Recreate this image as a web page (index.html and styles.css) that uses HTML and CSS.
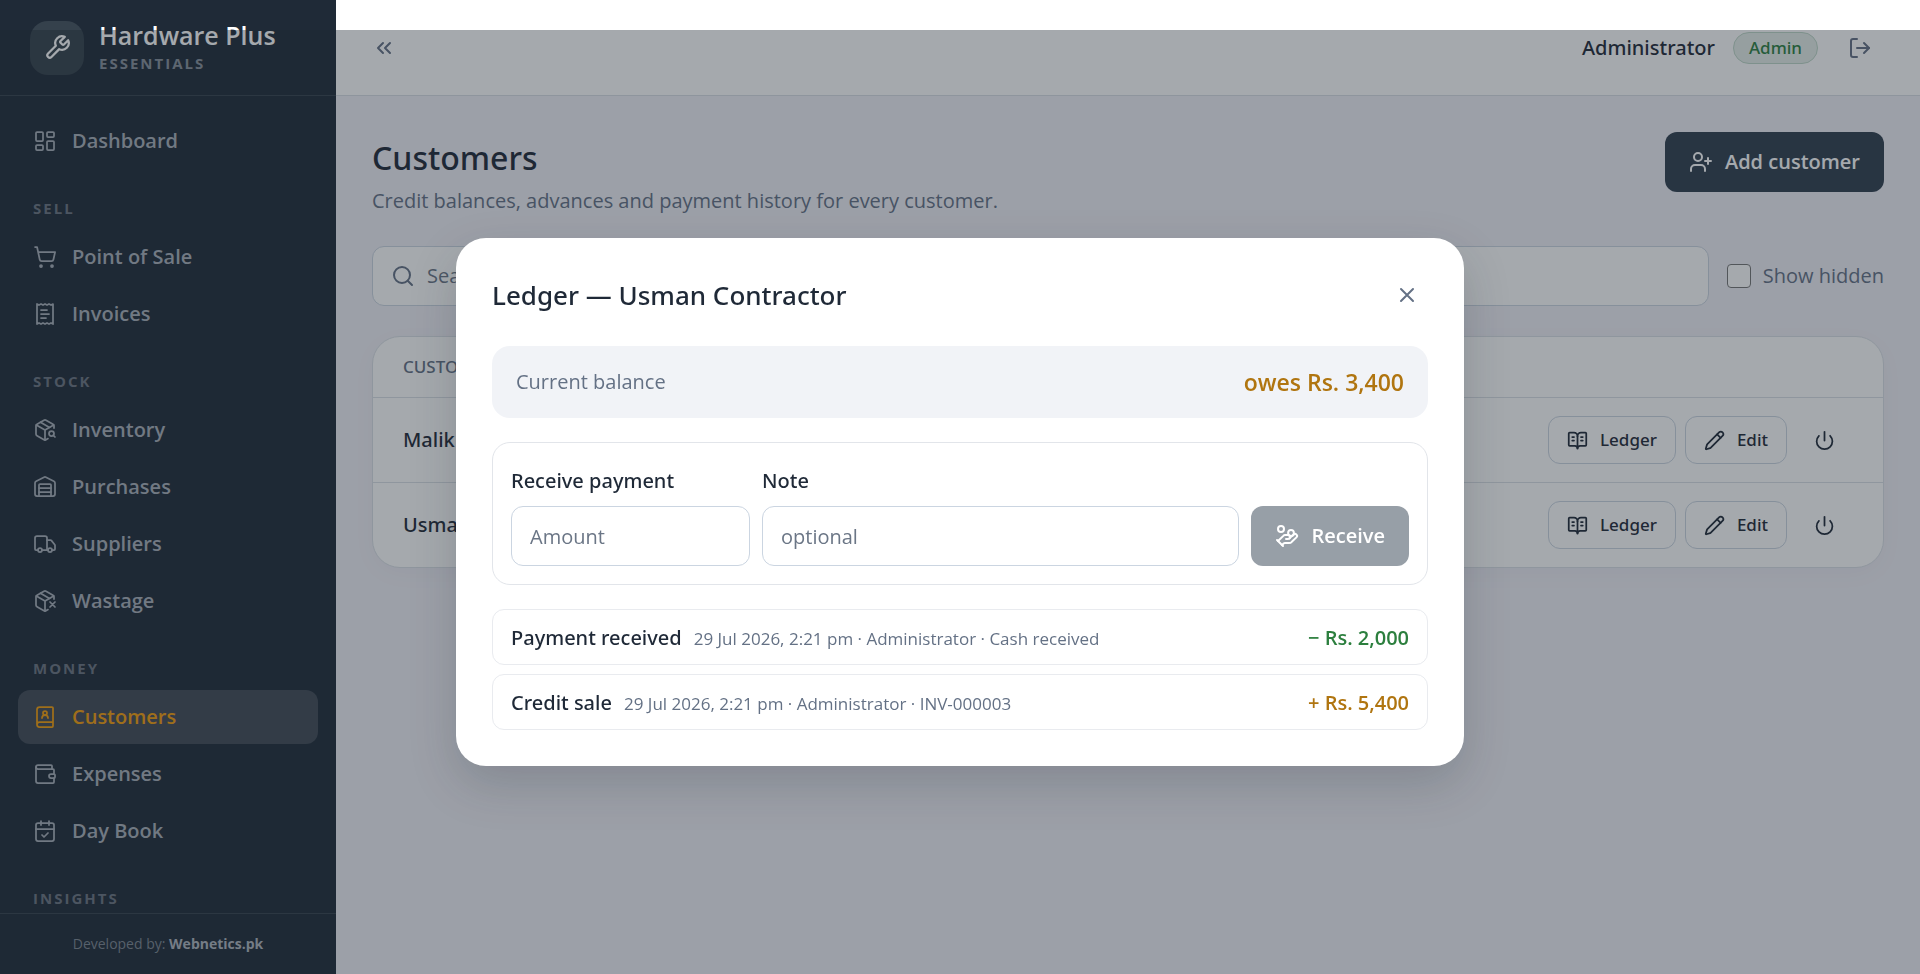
FILE: index.html
```html
<!DOCTYPE html>
<html lang="en">
<head>
<meta charset="utf-8">
<meta name="viewport" content="width=device-width, initial-scale=1">
<title>Customers – Hardware Plus</title>
<link rel="stylesheet" href="styles.css">
</head>
<body>
<svg class="sprite" aria-hidden="true">
  <symbol id="i-wrench" viewBox="0 0 24 24"><path d="M14.7 6.3a1 1 0 0 0 0 1.4l1.6 1.6a1 1 0 0 0 1.4 0l3.77-3.77a6 6 0 0 1-7.94 7.94l-6.91 6.91a2.12 2.12 0 0 1-3-3l6.91-6.91a6 6 0 0 1 7.94-7.94l-3.76 3.76z"/></symbol>
  <symbol id="i-dashboard" viewBox="0 0 24 24"><rect width="7" height="9" x="3" y="3" rx="1"/><rect width="7" height="5" x="14" y="3" rx="1"/><rect width="7" height="9" x="14" y="12" rx="1"/><rect width="7" height="5" x="3" y="16" rx="1"/></symbol>
  <symbol id="i-cart" viewBox="0 0 24 24"><circle cx="8" cy="21" r="1"/><circle cx="19" cy="21" r="1"/><path d="M2.05 2.05h2l2.66 12.42a2 2 0 0 0 2 1.58h9.78a2 2 0 0 0 1.95-1.57l1.65-7.43H5.12"/></symbol>
  <symbol id="i-receipt" viewBox="0 0 24 24"><path d="M4 2v20l2-1 2 1 2-1 2 1 2-1 2 1 2-1 2 1V2l-2 1-2-1-2 1-2-1-2 1-2-1-2 1Z"/><path d="M14 8H8M16 12H8M13 16H8"/></symbol>
  <symbol id="i-package-search" viewBox="0 0 24 24"><path d="M21 10V8a2 2 0 0 0-1-1.73l-7-4a2 2 0 0 0-2 0l-7 4A2 2 0 0 0 3 8v8a2 2 0 0 0 1 1.73l7 4a2 2 0 0 0 2 0l2-1.14"/><path d="m7.5 4.27 9 5.15"/><path d="M3.29 7 12 12l8.71-5M12 22V12"/><circle cx="18.5" cy="15.5" r="2.5"/><path d="M20.27 17.27 22 19"/></symbol>
  <symbol id="i-package-x" viewBox="0 0 24 24"><path d="M21 10V8a2 2 0 0 0-1-1.73l-7-4a2 2 0 0 0-2 0l-7 4A2 2 0 0 0 3 8v8a2 2 0 0 0 1 1.73l7 4a2 2 0 0 0 2 0l2-1.14"/><path d="m7.5 4.27 9 5.15"/><path d="M3.29 7 12 12l8.71-5M12 22V12"/><path d="m17 13 5 5m-5 0 5-5"/></symbol>
  <symbol id="i-warehouse" viewBox="0 0 24 24"><path d="M18 21V10a1 1 0 0 0-1-1H7a1 1 0 0 0-1 1v11"/><path d="M22 19a2 2 0 0 1-2 2H4a2 2 0 0 1-2-2V8a2 2 0 0 1 1.132-1.803l7.95-3.974a2 2 0 0 1 1.837 0l7.948 3.974A2 2 0 0 1 22 8z"/><path d="M6 13h12M6 17h12"/></symbol>
  <symbol id="i-truck" viewBox="0 0 24 24"><path d="M14 18V6a2 2 0 0 0-2-2H4a2 2 0 0 0-2 2v11a1 1 0 0 0 1 1h2"/><path d="M15 18H9"/><path d="M19 18h2a1 1 0 0 0 1-1v-3.65a1 1 0 0 0-.22-.624l-3.48-4.35A1 1 0 0 0 17.52 8H14"/><circle cx="17" cy="18" r="2"/><circle cx="7" cy="18" r="2"/></symbol>
  <symbol id="i-book-user" viewBox="0 0 24 24"><path d="M15 13a3 3 0 1 0-6 0"/><path d="M4 19.5v-15A2.5 2.5 0 0 1 6.5 2H19a1 1 0 0 1 1 1v18a1 1 0 0 1-1 1H6.5a1 1 0 0 1 0-5H20"/><circle cx="12" cy="8" r="2"/></symbol>
  <symbol id="i-wallet" viewBox="0 0 24 24"><path d="M19 7V4a1 1 0 0 0-1-1H5a2 2 0 0 0 0 4h15a1 1 0 0 1 1 1v4h-3a2 2 0 0 0 0 4h3a1 1 0 0 0 1-1v-2a1 1 0 0 0-1-1"/><path d="M3 5v14a2 2 0 0 0 2 2h15a1 1 0 0 0 1-1v-4"/></symbol>
  <symbol id="i-calendar" viewBox="0 0 24 24"><path d="M8 2v4M16 2v4"/><rect width="18" height="18" x="3" y="4" rx="2"/><path d="M3 10h18"/><path d="m9 16 2 2 4-4"/></symbol>
  <symbol id="i-chevrons" viewBox="0 0 24 24"><path d="m11 17-5-5 5-5"/><path d="m18 17-5-5 5-5"/></symbol>
  <symbol id="i-logout" viewBox="0 0 24 24"><path d="m16 17 5-5-5-5"/><path d="M21 12H9"/><path d="M9 21H5a2 2 0 0 1-2-2V5a2 2 0 0 1 2-2h4"/></symbol>
  <symbol id="i-user-plus" viewBox="0 0 24 24"><path d="M16 21v-2a4 4 0 0 0-4-4H6a4 4 0 0 0-4 4v2"/><circle cx="9" cy="7" r="4"/><path d="M19 8v6M22 11h-6"/></symbol>
  <symbol id="i-search" viewBox="0 0 24 24"><circle cx="11" cy="11" r="8"/><path d="m21 21-4.3-4.3"/></symbol>
  <symbol id="i-book-open" viewBox="0 0 24 24"><path d="M12 7v14M16 12h2M16 8h2M6 12h2M6 8h2"/><path d="M3 18a1 1 0 0 1-1-1V4a1 1 0 0 1 1-1h5a4 4 0 0 1 4 4 4 4 0 0 1 4-4h5a1 1 0 0 1 1 1v13a1 1 0 0 1-1 1h-6a3 3 0 0 0-3 3 3 3 0 0 0-3-3z"/></symbol>
  <symbol id="i-pencil" viewBox="0 0 24 24"><path d="M21.174 6.812a1 1 0 0 0-3.986-3.987L3.842 16.174a2 2 0 0 0-.5.83l-1.321 4.352a.5.5 0 0 0 .623.622l4.353-1.32a2 2 0 0 0 .83-.497z"/><path d="m15 5 4 4"/></symbol>
  <symbol id="i-power" viewBox="0 0 24 24"><path d="M12 2v10"/><path d="M18.4 6.6a9 9 0 1 1-12.77.04"/></symbol>
  <symbol id="i-x" viewBox="0 0 24 24"><path d="M18 6 6 18M6 6l12 12"/></symbol>
  <symbol id="i-hand-coins" viewBox="0 0 24 24"><path d="M11 15h2a2 2 0 1 0 0-4h-3c-.6 0-1.1.2-1.4.6L3 17"/><path d="m7 21 1.6-1.4c.3-.4.8-.6 1.4-.6h4c1.1 0 2.1-.4 2.8-1.2l4.6-4.4a2 2 0 0 0-2.75-2.91l-4.2 3.9"/><path d="m2 16 6 6"/><circle cx="16" cy="9" r="2.9"/><circle cx="6" cy="5" r="3"/></symbol>
</svg>

<div class="app">
  <aside class="sidebar">
    <div class="brand">
      <span class="brand-mark"><svg class="icon icon-lg"><use href="#i-wrench"/></svg></span>
      <div>
        <div class="brand-name">Hardware Plus</div>
        <div class="brand-tag">ESSENTIALS</div>
      </div>
    </div>
    <nav class="nav" aria-label="Main">
      <a class="nav-item" href="#"><svg class="icon"><use href="#i-dashboard"/></svg>Dashboard</a>
      <div class="nav-label">SELL</div>
      <a class="nav-item" href="#"><svg class="icon"><use href="#i-cart"/></svg>Point of Sale</a>
      <a class="nav-item" href="#"><svg class="icon"><use href="#i-receipt"/></svg>Invoices</a>
      <div class="nav-label">STOCK</div>
      <a class="nav-item" href="#"><svg class="icon"><use href="#i-package-search"/></svg>Inventory</a>
      <a class="nav-item" href="#"><svg class="icon"><use href="#i-warehouse"/></svg>Purchases</a>
      <a class="nav-item" href="#"><svg class="icon"><use href="#i-truck"/></svg>Suppliers</a>
      <a class="nav-item" href="#"><svg class="icon"><use href="#i-package-x"/></svg>Wastage</a>
      <div class="nav-label">MONEY</div>
      <a class="nav-item active" href="#" aria-current="page"><svg class="icon"><use href="#i-book-user"/></svg>Customers</a>
      <a class="nav-item" href="#"><svg class="icon"><use href="#i-wallet"/></svg>Expenses</a>
      <a class="nav-item" href="#"><svg class="icon"><use href="#i-calendar"/></svg>Day Book</a>
      <div class="nav-label">INSIGHTS</div>
    </nav>
    <footer class="credit">Developed by: <strong>Webnetics.pk</strong></footer>
  </aside>

  <div class="content">
    <header class="topbar">
      <button class="ghost" type="button" aria-label="Collapse sidebar"><svg class="icon"><use href="#i-chevrons"/></svg></button>
      <div class="account">
        <span class="user">Administrator</span>
        <span class="badge">Admin</span>
        <button class="ghost ghost-pad" type="button" aria-label="Log out"><svg class="icon"><use href="#i-logout"/></svg></button>
      </div>
    </header>

    <main class="main">
      <div class="page-head">
        <div>
          <h1>Customers</h1>
          <p>Credit balances, advances and payment history for every customer.</p>
        </div>
        <button class="btn-primary" type="button"><svg class="icon"><use href="#i-user-plus"/></svg>Add customer</button>
      </div>

      <div class="filters">
        <div class="search">
          <svg class="icon"><use href="#i-search"/></svg>
          <input type="text" placeholder="Search" aria-label="Search customers">
        </div>
        <label class="check"><input type="checkbox">Show hidden</label>
      </div>

      <div class="card">
        <table>
          <thead><tr><th>CUSTOMER</th><th></th></tr></thead>
          <tbody>
            <tr>
              <td>Malik</td>
              <td><div class="actions">
                <button class="btn-small" type="button"><svg class="icon icon-sm"><use href="#i-book-open"/></svg>Ledger</button>
                <button class="btn-small" type="button"><svg class="icon icon-sm"><use href="#i-pencil"/></svg>Edit</button>
                <button class="btn-power" type="button" aria-label="Hide Malik"><svg class="icon icon-sm"><use href="#i-power"/></svg></button>
              </div></td>
            </tr>
            <tr>
              <td>Usman Contractor</td>
              <td><div class="actions">
                <button class="btn-small" type="button"><svg class="icon icon-sm"><use href="#i-book-open"/></svg>Ledger</button>
                <button class="btn-small" type="button"><svg class="icon icon-sm"><use href="#i-pencil"/></svg>Edit</button>
                <button class="btn-power" type="button" aria-label="Hide Usman Contractor"><svg class="icon icon-sm"><use href="#i-power"/></svg></button>
              </div></td>
            </tr>
          </tbody>
        </table>
      </div>
    </main>
  </div>
</div>

<div class="overlay">
  <section class="modal" role="dialog" aria-modal="true" aria-labelledby="ledger-title">
    <header class="modal-head">
      <h2 id="ledger-title">Ledger — Usman Contractor</h2>
      <button class="ghost close" type="button" aria-label="Close"><svg class="icon"><use href="#i-x"/></svg></button>
    </header>
    <div class="balance"><span>Current balance</span><strong>owes Rs. 3,400</strong></div>
    <form class="pay">
      <div class="field field-amount"><label for="amount">Receive payment</label><input id="amount" type="text" placeholder="Amount"></div>
      <div class="field field-note"><label for="note">Note</label><input id="note" type="text" placeholder="optional"></div>
      <button class="btn-primary" type="button" disabled><svg class="icon"><use href="#i-hand-coins"/></svg>Receive</button>
    </form>
    <ul class="entries">
      <li><span class="kind">Payment received</span><span class="meta">29 Jul 2026, 2:21 pm · Administrator · Cash received</span><span class="sum credit-in">− Rs. 2,000</span></li>
      <li><span class="kind">Credit sale</span><span class="meta">29 Jul 2026, 2:21 pm · Administrator · INV-000003</span><span class="sum debit">+ Rs. 5,400</span></li>
    </ul>
  </section>
</div>
</body>
</html>
```

FILE: styles.css
```css
*, *::before, *::after { box-sizing: border-box; }

:root {
  --ink: #1f2937;
  --muted: #647185;
  --line: #e2e5ea;
  --field: #cbd5e1;
  --amber: #b07510;
  --medium: "Noto Sans", "Open Sans", sans-serif;
}

body {
  margin: 0;
  font-family: "Open Sans", "Noto Sans", sans-serif;
  font-size: 20px;
  line-height: 30px;
  color: var(--ink);
  background: #f1f0f7;
}

button, input { font: inherit; color: inherit; }
h1, h2, p, ul { margin: 0; padding: 0; }

.sprite { position: absolute; width: 0; height: 0; }
.icon {
  width: 24px;
  height: 24px;
  flex: none;
  fill: none;
  stroke: currentColor;
  stroke-width: 2;
  stroke-linecap: round;
  stroke-linejoin: round;
}
.icon-sm { width: 21px; height: 21px; }
.icon-lg { width: 27px; height: 27px; }

.app { display: flex; height: 100vh; overflow: hidden; }

/* Sidebar */
.sidebar {
  width: 336px;
  flex: none;
  display: flex;
  flex-direction: column;
  background: #1f2a37;
  color: #fff;
}
.brand {
  display: flex;
  align-items: center;
  gap: 15px;
  height: 96px;
  flex: none;
  padding: 0 30px;
  border-bottom: 1px solid #36414d;
}
.brand-mark {
  display: grid;
  place-items: center;
  width: 54px;
  height: 54px;
  border-radius: 18px;
  background: #35414c;
}
.brand-name { font-size: 25px; font-weight: 600; line-height: 28px; }
.brand-tag { padding-top: 2px; font-size: 15px; font-weight: 700; line-height: 24px; letter-spacing: 2px; color: #87909b; }

.nav {
  flex: 1;
  min-height: 0;
  overflow: hidden;
  display: flex;
  flex-direction: column;
  gap: 3px;
  padding: 18px;
}
.nav-item {
  display: flex;
  align-items: center;
  gap: 15px;
  height: 54px;
  flex: none;
  padding: 0 15px;
  border-radius: 12px;
  font-weight: 600;
  color: #a9b0ba;
  text-decoration: none;
}
.nav-item .icon { stroke-width: 1.75; }
.nav-item.active { background: #414a56; color: #f59e0b; }
.nav-label {
  flex: none;
  padding: 25px 15px 7px;
  font-size: 15px;
  font-weight: 700;
  line-height: 24px;
  letter-spacing: 2px;
  color: #6b7480;
}
.credit {
  flex: none;
  padding: 18px;
  border-top: 1px solid #36414d;
  text-align: center;
  font-size: 14px;
  line-height: 24px;
  color: #7d8691;
}
.credit strong { color: #b0b6bf; }

/* Page */
.content { flex: 1; min-width: 0; display: flex; flex-direction: column; }
.topbar {
  display: flex;
  align-items: center;
  justify-content: space-between;
  height: 96px;
  flex: none;
  padding: 0 36px;
  background: #fff;
  border-bottom: 1px solid #d9dee4;
}
.ghost {
  display: grid;
  place-items: center;
  padding: 0;
  border: 0;
  background: none;
  color: var(--muted);
}
.ghost-pad { width: 48px; height: 48px; }
.account { display: flex; align-items: center; gap: 18px; }
.user { font-family: var(--medium); font-weight: 500; }
.badge {
  padding: 0 15px;
  border: 1px solid #bfd8c8;
  border-radius: 16px;
  background: #e6eeea;
  color: #2c8040;
  font-family: var(--medium);
  font-size: 17px;
  font-weight: 500;
}

.main { padding: 36px; display: flex; flex-direction: column; }
.page-head { display: flex; justify-content: space-between; align-items: flex-start; margin-bottom: 27px; }
.page-head h1 { font-family: var(--medium); font-size: 32px; font-weight: 500; line-height: 51px; }
.page-head p { line-height: 36px; color: var(--muted); }
.btn-primary {
  display: flex;
  align-items: center;
  gap: 12px;
  height: 60px;
  flex: none;
  padding: 0 24px;
  border: 0;
  border-radius: 12px;
  background: #2f3e4e;
  color: #fff;
  font-weight: 600;
}
.btn-primary:disabled { background: #979fa7; }

.filters { display: flex; align-items: center; gap: 18px; margin-bottom: 30px; }
.search {
  flex: 1;
  display: flex;
  align-items: center;
  gap: 12px;
  height: 60px;
  padding: 0 18px;
  border: 1px solid var(--field);
  border-radius: 12px;
  background: #fff;
  color: var(--muted);
}
.search input { flex: 1; min-width: 0; border: 0; padding: 0; background: none; outline: none; }
input::placeholder { color: #6b7686; opacity: 1; }
.check { display: flex; align-items: center; gap: 12px; color: var(--muted); }
.check input {
  appearance: none;
  width: 24px;
  height: 24px;
  margin: 0;
  border: 1px solid #767676;
  border-radius: 4px;
  background: #fff;
}

.card {
  overflow: hidden;
  border: 1px solid #dbe0e6;
  border-radius: 28px;
  background: #fff;
  box-shadow: 0 6px 24px rgba(31, 41, 55, 0.03);
}
table { width: 100%; border-collapse: separate; border-spacing: 0; }
th, td { text-align: left; font-family: var(--medium); font-weight: 500; border-bottom: 1px solid #dbe0e6; }
th { height: 61px; padding: 0 30px; font-size: 17px; color: var(--muted); }
td { height: 85px; padding: 0 30px; }
tbody tr:last-child td { height: 84px; border-bottom: 0; }
.actions { display: flex; justify-content: flex-end; gap: 9px; }
.btn-small {
  display: flex;
  align-items: center;
  gap: 12px;
  height: 48px;
  padding: 0 18px;
  border: 1px solid var(--field);
  border-radius: 12px;
  background: #fff;
  font-family: var(--medium);
  font-size: 17px;
  font-weight: 500;
}
.btn-power { display: grid; place-items: center; width: 57px; height: 48px; padding: 0; border: 0; background: none; }

/* Ledger dialog */
.overlay {
  position: fixed;
  inset: 30px 0 0;
  display: grid;
  place-items: center;
  background: rgba(31, 41, 51, 0.4);
}
.modal {
  width: min(1008px, 92%);
  padding: 36px;
  border-radius: 30px;
  background: #fff;
  box-shadow: 0 18px 48px rgba(31, 41, 51, 0.2);
}
.modal-head { display: flex; align-items: center; justify-content: space-between; margin-bottom: 30px; }
.modal-head h2 { font-family: var(--medium); font-size: 26px; font-weight: 500; line-height: 42px; }
.close { width: 42px; height: 42px; }
.balance {
  display: flex;
  align-items: center;
  justify-content: space-between;
  height: 72px;
  padding: 0 24px;
  border-radius: 18px;
  background: #f1f3f7;
  color: var(--muted);
}
.balance strong { font-size: 23px; font-weight: 600; color: var(--amber); }
.pay {
  display: flex;
  align-items: flex-end;
  gap: 12px;
  margin: 24px 0;
  padding: 22px 18px 18px;
  border: 1px solid var(--line);
  border-radius: 18px;
}
.field { display: flex; flex-direction: column; gap: 9px; min-width: 0; }
.field label { line-height: 32px; font-family: var(--medium); font-weight: 500; }
.field input {
  width: 100%;
  height: 60px;
  padding: 0 18px;
  border: 1px solid var(--field);
  border-radius: 12px;
  background: #fff;
}
.field-amount { width: 239px; }
.field-note { flex: 1; }
.entries { display: flex; flex-direction: column; gap: 9px; list-style: none; }
.entries li {
  display: flex;
  align-items: baseline;
  gap: 12px;
  padding: 13px 18px 11px;
  border: 1px solid #e9ebef;
  border-radius: 12px;
}
.kind { font-family: var(--medium); font-weight: 500; }
.meta { font-size: 17px; line-height: 24px; color: var(--muted); }
.sum { margin-left: auto; font-weight: 600; }
.credit-in { color: #2c7f3e; }
.debit { color: var(--amber); }
```
